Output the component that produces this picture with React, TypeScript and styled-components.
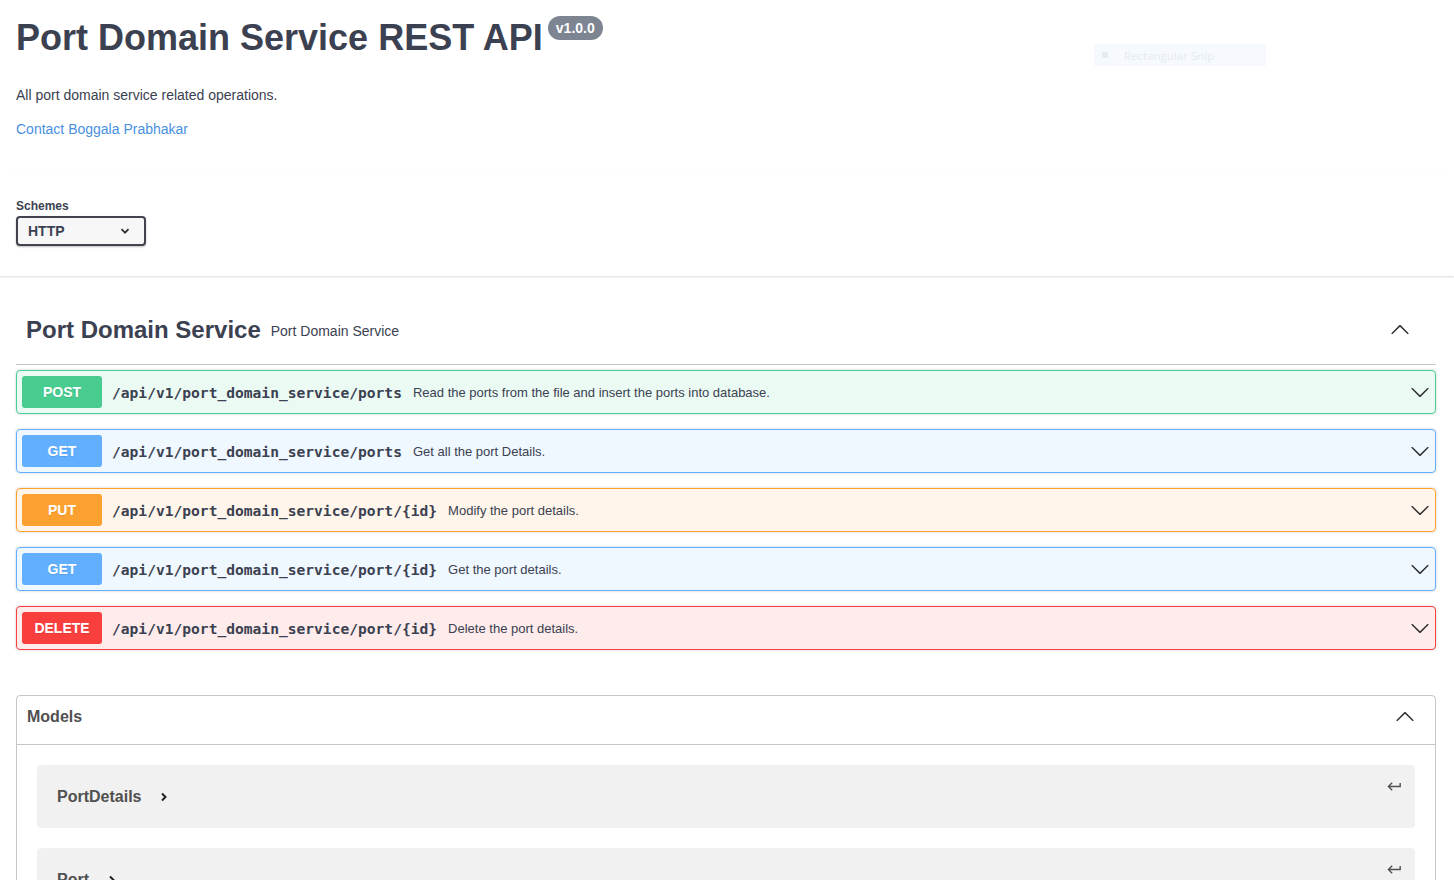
import React from "react";
import styled, { createGlobalStyle } from "styled-components";

const Global = createGlobalStyle`
  html { overflow: hidden; }
  body {
    margin: 0;
    background: #fff;
    font-family: "Liberation Sans", Arial, sans-serif;
    color: #3b4151;
  }
  * { box-sizing: border-box; }
`;

const Page = styled.div`
  position: relative;
  width: 100%;
`;

const Info = styled.div`
  padding: 17px 16px 0;
`;

const Title = styled.h2`
  margin: 0;
  font-size: 36px;
  line-height: 42px;
  font-weight: 700;
  color: #3b4151;
  display: flex;
  align-items: flex-start;
`;

const Version = styled.span`
  display: inline-flex;
  align-items: center;
  height: 24px;
  margin: -1px 0 0 5px;
  padding: 0 8px;
  border-radius: 57px;
  background: #7d8492;
  color: #fff;
  font-size: 14px;
  font-weight: 700;
  line-height: 1;
`;

const Desc = styled.p`
  margin: 27px 0 0;
  font-size: 14px;
  line-height: 18px;
  color: #3b4151;
`;

const Contact = styled.a`
  display: block;
  margin-top: 16px;
  font-size: 14px;
  line-height: 18px;
  color: #4990e2;
  text-decoration: none;
`;

const SchemeBar = styled.div`
  margin-top: 31px;
  padding: 30px 16px;
  background: #fff;
  box-shadow: 0 1px 2px 0 rgba(0, 0, 0, 0.15);
`;

const SchemeLabel = styled.label`
  display: block;
  font-size: 12px;
  line-height: 15px;
  font-weight: 700;
  color: #3b4151;
`;

const FakeSelect = styled.div`
  margin-top: 2px;
  width: 130px;
  height: 30px;
  border: 2px solid #41444e;
  border-radius: 4px;
  background: #f7f7f7;
  box-shadow: 0 1px 2px 0 rgba(0, 0, 0, 0.25);
  display: flex;
  align-items: center;
  justify-content: space-between;
  padding: 0 14px 0 10px;
  font-size: 14px;
  font-weight: 700;
  color: #3b4151;
`;

const Main = styled.div`
  padding: 20px 18px 0 16px;
`;

const TagHeader = styled.div`
  height: 69px;
  display: flex;
  align-items: center;
  padding: 0 26px 0 10px;
  border-bottom: 1px solid rgba(59, 65, 81, 0.3);
`;

const TagName = styled.h3`
  margin: 0;
  font-size: 24px;
  font-weight: 700;
  color: #3b4151;
`;

const TagDesc = styled.small`
  margin-left: 10px;
  font-size: 14px;
  color: #3b4151;
  flex: 1;
  padding-top: 1px;
`;

const Ops = styled.div`
  display: flex;
  flex-direction: column;
  gap: 15px;
  margin-top: 5px;
`;

const palette: Record<string, { c: string; bg: string }> = {
  POST: { c: "#49cc90", bg: "rgba(73,204,144,.1)" },
  GET: { c: "#61affe", bg: "rgba(97,175,254,.1)" },
  PUT: { c: "#fca130", bg: "rgba(252,161,48,.1)" },
  DELETE: { c: "#f93e3e", bg: "rgba(249,62,62,.1)" },
};

const Op = styled.div<{ $m: string }>`
  height: 44px;
  display: flex;
  align-items: center;
  padding: 5px;
  border: 1px solid ${(p) => palette[p.$m].c};
  background: ${(p) => palette[p.$m].bg};
  border-radius: 4px;
  box-shadow: 0 0 3px rgba(0, 0, 0, 0.19);
`;

const Method = styled.span<{ $m: string }>`
  width: 80px;
  height: 32px;
  flex: none;
  display: flex;
  align-items: center;
  justify-content: center;
  border-radius: 3px;
  background: ${(p) => palette[p.$m].c};
  color: #fff;
  font-size: 14px;
  font-weight: 700;
  text-shadow: 0 1px 0 rgba(0, 0, 0, 0.1);
`;

const Path = styled.span`
  margin-left: 10px;
  font-family: "DejaVu Sans Mono", "Liberation Mono", monospace;
  font-size: 14.6px;
  font-weight: 700;
  color: #3b4151;
  white-space: nowrap;
`;

const OpDesc = styled.span`
  margin-left: 11px;
  flex: 1;
  font-size: 13px;
  color: #3b4151;
`;

const Models = styled.section`
  margin-top: 45px;
  border: 1px solid rgba(59, 65, 81, 0.3);
  border-radius: 4px;
`;

const ModelsHeader = styled.div`
  display: flex;
  align-items: center;
  justify-content: space-between;
  padding: 11px 20px 17px 10px;
  border-bottom: 1px solid rgba(59, 65, 81, 0.3);
`;

const ModelsTitle = styled.h4`
  margin: 0;
  font-size: 16px;
  line-height: 20px;
  font-weight: 700;
  color: #505050;
`;

const ModelList = styled.div`
  padding: 20px 20px 0;
  display: flex;
  flex-direction: column;
  gap: 20px;
`;

const ModelBox = styled.div`
  height: 63px;
  border-radius: 4px;
  background: rgba(0, 0, 0, 0.055);
  display: flex;
  align-items: flex-start;
  justify-content: space-between;
  padding: 0 12px 0 20px;
`;

const ModelName = styled.span`
  align-self: center;
  display: flex;
  align-items: center;
  gap: 19px;
  font-size: 16px;
  font-weight: 700;
  color: #505050;
`;

const JumpIcon = styled.svg`
  margin-top: 13px;
  width: 17px;
  height: 17px;
  fill: #505050;
`;

const Snip = styled.div`
  position: absolute;
  left: 1094px;
  top: 44px;
  width: 172px;
  height: 22px;
  background: #f6faff;
  display: flex;
  align-items: center;
  gap: 16px;
  padding-left: 8px;
  font-family: "Open Sans", sans-serif;
  font-size: 11.5px;
  color: #e7eaee;
`;

const SnipDot = styled.span`
  width: 6px;
  height: 6px;
  border-radius: 1px;
  background: #e6ebf2;
`;

const ChevronDown = ({ size = 20 }: { size?: number }) => (
  <svg width={size} height={size} viewBox="0 0 20 20" aria-hidden>
    <path
      fill="#303030"
      d="M17.418 6.109c.272-.268.709-.268.979 0s.271.701 0 .969l-7.908 7.83c-.27.268-.707.268-.979 0l-7.908-7.83c-.27-.268-.27-.701 0-.969.271-.268.709-.268.979 0L10 13.25l7.418-7.141z"
    />
  </svg>
);

const ChevronUp = () => (
  <svg width={20} height={20} viewBox="0 0 20 20" aria-hidden>
    <path
      fill="#303030"
      d="M2.582 13.891c-.272.268-.709.268-.979 0s-.271-.701 0-.969l7.908-7.83c.27-.268.707-.268.979 0l7.908 7.83c.27.268.27.701 0 .969-.271.268-.709.268-.979 0L10 6.75l-7.418 7.141z"
    />
  </svg>
);

const SelectChevron = () => (
  <svg width={10} height={10} viewBox="0 0 10 10" aria-hidden>
    <path d="M1.5 3.2 L5 6.7 L8.5 3.2" fill="none" stroke="#303030" strokeWidth="1.8" />
  </svg>
);

const RightChevron = () => (
  <svg width={8} height={10} viewBox="0 0 8 10" aria-hidden>
    <path d="M2 1.5 L5.5 5 L2 8.5" fill="none" stroke="#222" strokeWidth="2" />
  </svg>
);

const ops = [
  { m: "POST", p: "/api/v1/port_domain_service/ports", d: "Read the ports from the file and insert the ports into database." },
  { m: "GET", p: "/api/v1/port_domain_service/ports", d: "Get all the port Details." },
  { m: "PUT", p: "/api/v1/port_domain_service/port/{id}", d: "Modify the port details." },
  { m: "GET", p: "/api/v1/port_domain_service/port/{id}", d: "Get the port details." },
  { m: "DELETE", p: "/api/v1/port_domain_service/port/{id}", d: "Delete the port details." },
];

const models = ["PortDetails", "Port"];

export default function App() {
  return (
    <Page>
      <Global />
      <Info>
        <Title>
          Port Domain Service REST API
          <Version>v1.0.0</Version>
        </Title>
        <Desc>All port domain service related operations.</Desc>
        <Contact href="#">Contact Boggala Prabhakar</Contact>
      </Info>
      <SchemeBar>
        <SchemeLabel>Schemes</SchemeLabel>
        <FakeSelect>
          HTTP
          <SelectChevron />
        </FakeSelect>
      </SchemeBar>
      <Main>
        <TagHeader>
          <TagName>Port Domain Service</TagName>
          <TagDesc>Port Domain Service</TagDesc>
          <ChevronUp />
        </TagHeader>
        <Ops>
          {ops.map((o, i) => (
            <Op key={i} $m={o.m}>
              <Method $m={o.m}>{o.m}</Method>
              <Path>{o.p}</Path>
              <OpDesc>{o.d}</OpDesc>
              <ChevronDown />
            </Op>
          ))}
        </Ops>
        <Models>
          <ModelsHeader>
            <ModelsTitle>Models</ModelsTitle>
            <ChevronUp />
          </ModelsHeader>
          <ModelList>
            {models.map((m) => (
              <ModelBox key={m}>
                <ModelName>
                  {m}
                  <RightChevron />
                </ModelName>
                <JumpIcon viewBox="0 0 24 24" aria-hidden>
                  <path d="M19 7v4H5.83l3.58-3.59L8 6l-6 6 6 6 1.41-1.41L5.83 13H21V7z" />
                </JumpIcon>
              </ModelBox>
            ))}
          </ModelList>
        </Models>
      </Main>
      <Snip>
        <SnipDot />
        Rectangular Snip
      </Snip>
    </Page>
  );
}
